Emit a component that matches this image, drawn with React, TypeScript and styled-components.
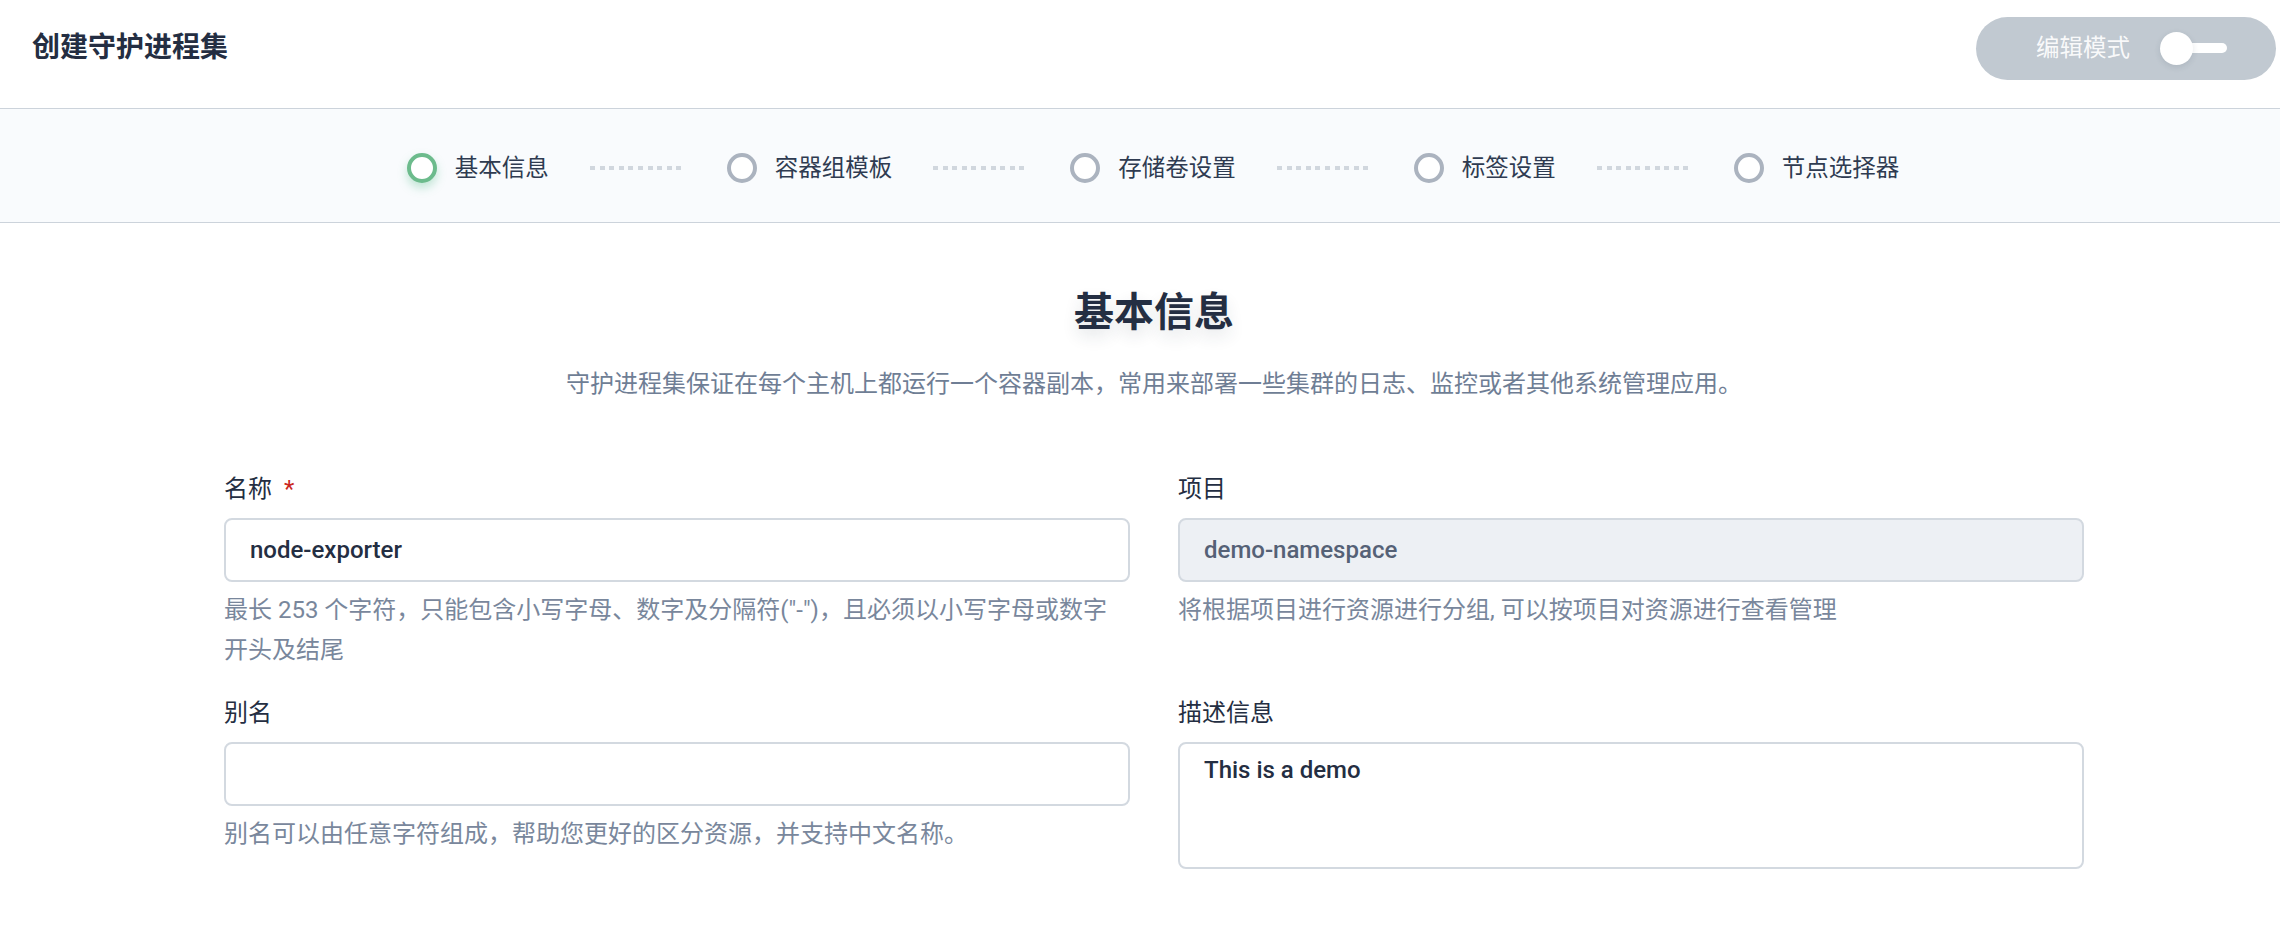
import React from 'react';
import styled, { createGlobalStyle } from 'styled-components';

const GlobalStyle = createGlobalStyle`
  html, body {
    margin: 0;
    padding: 0;
    background: #fff;
  }
  body {
    font-family: Roboto, "Noto Sans CJK SC", "Noto Sans", sans-serif;
    color: #242e42;
    -webkit-font-smoothing: antialiased;
  }
  * {
    box-sizing: border-box;
  }
`;

const STEPS = ['基本信息', '容器组模板', '存储卷设置', '标签设置', '节点选择器'];

export default function App(): React.ReactElement {
  return (
    <Page>
      <GlobalStyle />
      <Header>
        <Title>创建守护进程集</Title>
        <ModeSwitch>
          <ModeLabel>编辑模式</ModeLabel>
          <Toggle>
            <ToggleTrack />
            <ToggleKnob />
          </Toggle>
        </ModeSwitch>
      </Header>

      <StepBar>
        {STEPS.map((step, i) => (
          <React.Fragment key={step}>
            {i > 0 && <Connector />}
            <Step>
              <StepDot $active={i === 0} />
              <StepLabel>{step}</StepLabel>
            </Step>
          </React.Fragment>
        ))}
      </StepBar>

      <Content>
        <Heading>基本信息</Heading>
        <Intro>守护进程集保证在每个主机上都运行一个容器副本，常用来部署一些集群的日志、监控或者其他系统管理应用。</Intro>

        <FormGrid>
          <Field>
            <Label>
              名称<Required>*</Required>
            </Label>
            <TextInput defaultValue="node-exporter" />
            <Help>最长 253 个字符，只能包含小写字母、数字及分隔符("-")，且必须以小写字母或数字开头及结尾</Help>
          </Field>
          <Field>
            <Label>项目</Label>
            <TextInput defaultValue="demo-namespace" disabled />
            <Help>将根据项目进行资源进行分组, 可以按项目对资源进行查看管理</Help>
          </Field>
          <Field>
            <Label>别名</Label>
            <TextInput defaultValue="" />
            <Help>别名可以由任意字符组成，帮助您更好的区分资源，并支持中文名称。</Help>
          </Field>
          <Field>
            <Label>描述信息</Label>
            <TextArea defaultValue="This is a demo" />
          </Field>
        </FormGrid>
      </Content>
    </Page>
  );
}

const Page = styled.div`
  width: 100%;
  min-height: 950px;
  background: #fff;
`;

const Header = styled.header`
  height: 109px;
  display: flex;
  align-items: center;
  justify-content: space-between;
  padding: 0 4px 12px 32px;
  border-bottom: 1px solid #ccd3db;
`;

const Title = styled.h1`
  margin: 0;
  font-size: 28px;
  line-height: 36px;
  font-weight: 600;
  color: #242e42;
`;

const ModeSwitch = styled.div`
  width: 300px;
  height: 63px;
  border-radius: 32px;
  background: #c1c9d1;
  display: flex;
  align-items: center;
  gap: 30px;
  padding-left: 60px;
`;

const ModeLabel = styled.span`
  font-size: 23.5px;
  line-height: 32px;
  color: rgba(255, 255, 255, 0.92);
`;

const Toggle = styled.div`
  position: relative;
  width: 67px;
  height: 33px;
`;

const ToggleTrack = styled.span`
  position: absolute;
  left: 16px;
  top: 11px;
  width: 51px;
  height: 10px;
  border-radius: 5px;
  background: #fff;
`;

const ToggleKnob = styled.span`
  position: absolute;
  left: 0;
  top: 0;
  width: 33px;
  height: 33px;
  border-radius: 50%;
  background: #fff;
  box-shadow: 0 2px 6px rgba(36, 46, 66, 0.12);
`;

const StepBar = styled.nav`
  height: 114px;
  display: flex;
  align-items: center;
  justify-content: center;
  padding: 4px 0 0 26px;
  background: #f9fbfd;
  border-bottom: 1px solid #ccd3db;
`;

const Step = styled.div`
  display: flex;
  align-items: center;
  gap: 18px;
`;

const StepDot = styled.span<{ $active: boolean }>`
  width: 30px;
  height: 30px;
  border-radius: 50%;
  background: #fff;
  border: 4px solid ${({ $active }) => ($active ? '#6cbb8c' : '#abb3bf')};
  box-shadow: ${({ $active }) => ($active ? '0 5px 10px rgba(85, 188, 138, 0.35)' : 'none')};
`;

const StepLabel = styled.span`
  font-size: 23.5px;
  line-height: 32px;
  color: #2f3b51;
`;

const Connector = styled.span`
  width: 96px;
  height: 4px;
  margin: 0 41px;
  background: repeating-linear-gradient(90deg, #d1d7de 0 5px, transparent 5px 9.6px);
`;

const Content = styled.main`
  display: flex;
  flex-direction: column;
  align-items: center;
  padding: 64px 0 60px 28px;
`;

const Heading = styled.h2`
  margin: 0;
  font-size: 40px;
  line-height: 52px;
  font-weight: 700;
  color: #242e42;
  text-shadow: 0 8px 16px rgba(36, 46, 66, 0.12);
`;

const Intro = styled.p`
  margin: 28px 0 0;
  font-size: 24px;
  line-height: 34px;
  color: #6f7e95;
`;

const FormGrid = styled.div`
  margin-top: 71px;
  display: grid;
  grid-template-columns: 906px 906px;
  column-gap: 48px;
  row-gap: 26px;
`;

const Field = styled.div`
  display: flex;
  flex-direction: column;
`;

const Label = styled.label`
  font-size: 24px;
  line-height: 34px;
  color: #242e42;
  margin-bottom: 12px;
`;

const Required = styled.span`
  margin-left: 12px;
  color: #ca2621;
`;

const TextInput = styled.input`
  height: 64px;
  padding: 0 24px;
  border: 2px solid #d3d9e0;
  border-radius: 8px;
  background: #fff;
  font-family: Roboto, "Noto Sans CJK SC", sans-serif;
  font-size: 24px;
  font-weight: 500;
  color: #242e42;
  outline: none;

  &:disabled {
    background: #edf0f4;
    color: #556176;
  }
`;

const TextArea = styled.textarea`
  height: 127px;
  padding: 9px 24px;
  border: 2px solid #d3d9e0;
  border-radius: 8px;
  background: #fff;
  font-family: Roboto, "Noto Sans CJK SC", sans-serif;
  font-size: 24px;
  line-height: 34px;
  font-weight: 500;
  color: #242e42;
  resize: none;
  outline: none;
`;

const Help = styled.div`
  margin-top: 8px;
  font-size: 24px;
  line-height: 40px;
  color: #79879c;
`;
